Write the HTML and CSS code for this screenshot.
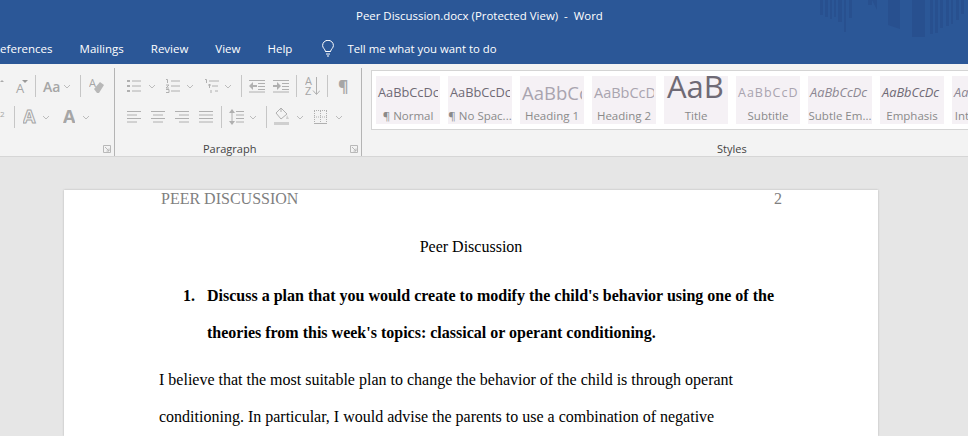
FILE: index.html
```html
<!DOCTYPE html>
<html lang="en">
<head>
    <meta charset="UTF-8">
    <meta name="viewport" content="width=device-width, initial-scale=1.0">
    <title>Peer Discussion.docx (Protected View) - Word</title>
    <link rel="stylesheet" href="styles.css">
</head>
<body>
    <header class="titlebar">
        <div class="doc-title">Peer Discussion.docx (Protected View)&nbsp; -&nbsp; Word</div>
        <svg class="title-art" width="148" height="37" viewBox="0 0 148 37">
            <path fill="#28508f" d="M0 0h3v15H0zM5 0h3v17H5zM10 0h2v19h-2zM14 0h2v17h-2zM18 0h4v22h-4zM24 0h2v32h-2zM29 0h3v18h-3zM48 0h4v5h-4zM52 0l5 10V0zM68 0h12v29l-12-4zM92 0h13v37H92zM110 0h3v34h-3zM115 0h3v33h-3zM120 0h3v28h-3zM126 0h3v26h-3zM131 0h2v24h-2zM136 0h3v20h-3zM141 0h3v14h-3z"/>
        </svg>
        <nav class="tabs">
            <span class="tab">References</span>
            <span class="tab">Mailings</span>
            <span class="tab">Review</span>
            <span class="tab">View</span>
            <span class="tab">Help</span>
            <svg class="bulb" width="12" height="17" viewBox="0 0 12 17">
                <path d="M3.5 11.5C3 9 .6 8 .6 5.5a5.4 5.2 0 0 1 10.8 0c0 2.5-2.4 3.500-2.900 6z M3.500 11.500h5M4 14h4M5 16h2" fill="none" stroke="#fff"/>
            </svg>
            <span class="tell">Tell me what you want to do</span>
        </nav>
    </header>

    <section class="ribbon">
        <div class="group group-font">
            <div class="tools font-top">
                <svg width="4" height="22" viewBox="0 0 4 22"><path d="M0 7l2-2 2 2z" fill="#aaa"/></svg>
                <svg width="14" height="22" viewBox="0 0 14 22"><text x="2" y="18" class="glyph glyph-sm">A</text><path d="M8 5h6l-3 3z" fill="#999"/></svg>
                <i class="divider"></i>
                <span class="case-btn">Aa</span>
                <svg class="chev" viewBox="0 0 8 5"><path d="M1 1l3 3 3-3"/></svg>
                <i class="divider"></i>
                <svg width="16" height="22" viewBox="0 0 16 22">
                    <text x="0" y="12" class="glyph glyph-xs">A</text>
                    <path d="M5 14l6-7 4 3-5 8H8z" fill="#b8b8b8"/>
                </svg>
            </div>
            <div class="tools font-bottom">
                <span class="sup">2</span>
                <i class="divider"></i>
                <svg width="14" height="22" viewBox="0 0 14 22"><text x="0" y="17" class="glyph glyph-outline">A</text></svg>
                <svg class="chev" viewBox="0 0 8 5"><path d="M1 1l3 3 3-3"/></svg>
                <svg width="12" height="22" viewBox="0 0 12 22"><text x="0" y="17" class="glyph glyph-bold">A</text></svg>
                <svg class="chev" viewBox="0 0 8 5"><path d="M1 1l3 3 3-3"/></svg>
            </div>
            <div class="group-foot">
                <svg class="launcher" viewBox="0 0 8 8"><path d="M.5 7.500V.5h7v7zM2 2l4 4M6 3.500V6H3.500"/></svg>
            </div>
        </div>

        <div class="group group-para">
            <div class="tools para-top">
                <svg width="14" height="14" viewBox="0 0 14 14"><path class="dots" d="M0 1h3v2H0zM0 6h3v2H0zM0 11h3v2H0z"/><path class="ln" d="M5 2h9M5 7h9M5 12h9"/></svg>
                <svg class="chev" viewBox="0 0 8 5"><path d="M1 1l3 3 3-3"/></svg>
                <svg width="15" height="14" viewBox="0 0 15 14"><path class="ln" d="M6 2h9M6 7h9M6 12h9M1 .5h1.500V4M1 6h3L1 9h3M1 10.500h3v3H1"/></svg>
                <svg class="chev" viewBox="0 0 8 5"><path d="M1 1l3 3 3-3"/></svg>
                <svg width="16" height="14" viewBox="0 0 16 14"><path class="ln" d="M5 2h10M8 7h6M11 12h3M1 .5h1.500V4M4 6h3M5.500 5v4M7 11v3"/></svg>
                <svg class="chev" viewBox="0 0 8 5"><path d="M1 1l3 3 3-3"/></svg>
                <i class="divider"></i>
                <svg width="16" height="14" viewBox="0 0 16 14"><path class="ln" d="M0 1.500h16M9 4.500h7M9 7.500h7M9 10.500h7M0 13h16"/><path class="dots" d="M0 7l4-4v3h4v2H4v3z"/></svg>
                <svg width="16" height="14" viewBox="0 0 16 14"><path class="ln" d="M0 1.500h16M9 4.500h7M9 7.500h7M9 10.500h7M0 13h16"/><path class="dots" d="M8 7L4 3v3H0v2h4v3z"/></svg>
                <i class="divider"></i>
                <svg width="15" height="20" viewBox="0 0 15 20">
                    <text x="0" y="9" class="glyph glyph-xs">A</text>
                    <text x="0" y="19" class="glyph glyph-xs">Z</text>
                    <path class="ln" d="M11.500 1v17M8 14.500l3.500 4 3.500-4"/>
                </svg>
                <i class="divider"></i>
                <span class="pilcrow">¶</span>
            </div>
            <div class="tools para-bottom">
                <svg width="14" height="14" viewBox="0 0 14 14"><path class="ln" d="M0 1.500h14M0 5h10M0 8.500h14M0 12h10"/></svg>
                <svg width="14" height="14" viewBox="0 0 14 14"><path class="ln" d="M0 1.500h14M2 5h10M0 8.500h14M2 12h10"/></svg>
                <svg width="14" height="14" viewBox="0 0 14 14"><path class="ln" d="M0 1.500h14M4 5h10M0 8.500h14M4 12h10"/></svg>
                <svg width="14" height="14" viewBox="0 0 14 14"><path class="ln" d="M0 1.500h14M0 5h14M0 8.500h14M0 12h14"/></svg>
                <i class="divider"></i>
                <svg width="15" height="16" viewBox="0 0 15 16"><path class="ln" d="M7 2.500h8M7 6h8M7 9.500h8M7 13h8M3 1v14"/><path class="dots" d="M0 4l3-4 3 4zM0 12l3 4 3-4z"/></svg>
                <svg class="chev" viewBox="0 0 8 5"><path d="M1 1l3 3 3-3"/></svg>
                <i class="divider"></i>
                <svg width="16" height="20" viewBox="0 0 16 20"><path class="ln" d="M7 1L2 6l5 6 6-5zM7 1v4"/><path class="dots" d="M13 8l2 4h-3zM0 15h15v3H0z" opacity=".55"/></svg>
                <svg class="chev" viewBox="0 0 8 5"><path d="M1 1l3 3 3-3"/></svg>
                <svg width="13" height="14" viewBox="0 0 13 14"><path class="ln dash" d="M.5 1v12M12.500 1v12M0 .5h13M6.500 1v12M0 7h13"/><path class="ln" d="M0 13.500h13"/></svg>
                <svg class="chev" viewBox="0 0 8 5"><path d="M1 1l3 3 3-3"/></svg>
            </div>
            <div class="group-foot">
                <span class="group-label">Paragraph</span>
                <svg class="launcher" viewBox="0 0 8 8"><path d="M.5 7.500V.5h7v7zM2 2l4 4M6 3.500V6H3.500"/></svg>
            </div>
        </div>

        <div class="group-styles">
            <div class="gallery">
                <div class="style"><div class="sample s-normal">AaBbCcDc</div><div class="style-name">¶ Normal</div></div>
                <div class="style"><div class="sample s-normal">AaBbCcDc</div><div class="style-name">¶ No Spac...</div></div>
                <div class="style"><div class="sample s-h1">AaBbCc</div><div class="style-name">Heading 1</div></div>
                <div class="style"><div class="sample s-h2">AaBbCcD</div><div class="style-name">Heading 2</div></div>
                <div class="style"><div class="sample s-title">AaB</div><div class="style-name">Title</div></div>
                <div class="style"><div class="sample s-subtitle">AaBbCcD</div><div class="style-name">Subtitle</div></div>
                <div class="style"><div class="sample s-subtle">AaBbCcDc</div><div class="style-name">Subtle Em...</div></div>
                <div class="style"><div class="sample s-emph">AaBbCcDc</div><div class="style-name">Emphasis</div></div>
                <div class="style"><div class="sample s-subtle">AaBbCcDc</div><div class="style-name">Intense E...</div></div>
            </div>
            <div class="styles-label">Styles</div>
        </div>
    </section>

    <main class="workspace">
        <article class="page">
            <div class="page-header">
                <span>PEER DISCUSSION</span>
                <span>2</span>
            </div>
            <h1 class="doc-heading">Peer Discussion</h1>
            <ol class="questions">
                <li>Discuss a plan that you would create to modify the child's behavior using one of the theories from this week's topics: classical or operant conditioning.</li>
            </ol>
            <p class="answer">I believe that the most suitable plan to change the behavior of the child is through operant<br>conditioning. In particular, I would advise the parents to use a combination of negative</p>
        </article>
    </main>
</body>
</html>
```

FILE: styles.css
```css
* {
    box-sizing: border-box;
}
body {
    margin: 0;
    height: 100vh;
    overflow: hidden;
    display: flex;
    flex-direction: column;
    background-color: #e6e6e6;
    font-family: "Open Sans", "Noto Sans", sans-serif;
}

/* title bar and tabs */
.titlebar {
    position: relative;
    flex: none;
    height: 64px;
    padding-top: 8px;
    background-color: #2b5797;
    color: #fff;
}
.doc-title {
    height: 16px;
    line-height: 16px;
    padding-left: 356px;
    font-size: 11.45px;
    white-space: nowrap;
}
.title-art {
    position: absolute;
    top: 0;
    right: 0;
}
.tabs {
    display: flex;
    align-items: center;
    height: 24px;
    margin-top: 12px;
    margin-left: -7px;
    font-size: 11.5px;
    white-space: nowrap;
}
.tab {
    margin-right: 27px;
}
.bulb {
    margin-left: 3px;
}
.tell {
    margin-left: 13px;
    font-size: 11.35px;
}

/* ribbon */
.ribbon {
    flex: none;
    display: flex;
    height: 93px;
    background-color: #f3f3f3;
    border-bottom: 1px solid #d6d6d6;
    overflow: hidden;
}
.group {
    display: flex;
    flex-direction: column;
    height: 89px;
    margin-top: 4px;
    padding-top: 7px;
    border-right: 1px solid #b4b4b4;
}
.group-font {
    width: 115px;
}
.group-para {
    width: 247px;
    padding-left: 12px;
}
.tools {
    display: grid;
    align-items: center;
    justify-items: start;
    height: 22px;
}
.tools + .tools {
    margin-top: 9px;
}
.font-top {
    grid-template-columns: 14px 21px 8px 20px 17px 9px 16px;
}
.font-bottom {
    grid-template-columns: 14px 9px 19px 21px 19px 8px;
}
.para-top {
    grid-template-columns: 21px 17px 21px 18px 20px 17px 8px 24px 23px 9px 22px 11px 10px;
}
.para-bottom {
    grid-template-columns: 24px 24px 24px 22px 8px 20px 17px 8px 22px 18px 21px 8px;
}
.divider {
    display: block;
    width: 1px;
    height: 22px;
    background-color: #c6c6c6;
}
.chev {
    width: 8px;
    height: 5px;
    fill: none;
    stroke: #bcbcbc;
}
.ln {
    fill: none;
    stroke: #b0b0b0;
}
.dash {
    stroke-dasharray: 1 1;
}
.dots {
    fill: #b0b0b0;
}
.glyph {
    font-family: "Open Sans", sans-serif;
    fill: #a6a6a6;
}
.glyph-xs {
    font-size: 11px;
}
.glyph-sm {
    font-size: 13px;
}
.glyph-outline {
    font-size: 18px;
    font-weight: 700;
    fill: #f3f3f3;
    stroke: #a6a6a6;
}
.glyph-bold {
    font-size: 18px;
    font-weight: 700;
}
.case-btn {
    color: #a6a6a6;
    font-size: 14px;
    font-weight: 600;
}
.sup {
    color: #a6a6a6;
    font-size: 8px;
    padding-bottom: 8px;
}
.pilcrow {
    color: #a6a6a6;
    font-size: 16px;
    font-weight: 700;
    line-height: 22px;
}
.group-foot {
    display: flex;
    align-items: center;
    height: 16px;
    margin-top: 13px;
    padding-right: 3px;
}
.group-label, .styles-label {
    color: #444;
    font-size: 11px;
    line-height: 16px;
}
.group-label {
    margin-left: 76px;
}
.launcher {
    margin-left: auto;
    width: 8px;
    height: 8px;
    fill: none;
    stroke: #b8b8b8;
}

/* style gallery */
.group-styles {
    flex: none;
    width: 606px;
    padding: 6px 0 0 9px;
}
.gallery {
    display: flex;
    gap: 8px;
    width: 700px;
    height: 60px;
    padding: 5px 4px;
    background-color: #fff;
    border: 1px solid #d4d4d4;
    border-right: 0;
}
.style {
    flex: none;
    width: 64px;
    height: 48px;
    overflow: hidden;
    background-color: #f5f1f5;
    text-align: center;
    white-space: nowrap;
}
.sample {
    width: 62px;
    height: 30px;
    overflow: hidden;
    padding-left: 2px;
    text-align: left;
    color: #6f6a75;
    font-size: 12.8px;
    line-height: 33px;
}
.s-h1 {
    color: #a9a4af;
    font-size: 18.5px;
}
.s-h2 {
    color: #a9a4af;
    font-size: 14.5px;
}
.s-title {
    padding-left: 3px;
    font-size: 31px;
    line-height: 20px;
}
.s-subtitle {
    color: #a9a4af;
    font-size: 12.5px;
    letter-spacing: 1px;
}
.s-subtle {
    color: #8c8792;
    font-style: italic;
}
.s-emph {
    font-style: italic;
}
.style-name {
    color: #8a8a8a;
    font-size: 11.5px;
    line-height: 19px;
}
.styles-label {
    width: 606px;
    margin-top: 11px;
    padding-left: 346px;
}

/* document */
.workspace {
    flex: 1;
    min-height: 0;
    display: flex;
    padding: 33px 0 0 64px;
}
.page {
    width: 814px;
    background-color: #fff;
    box-shadow: 0 0 2px #b4b4b4;
    font-family: "Liberation Serif", serif;
    font-size: 16px;
    color: #000;
}
.page-header {
    display: flex;
    justify-content: space-between;
    height: 18px;
    padding: 0 96px 0 97px;
    color: #7f7f7f;
    line-height: 18px;
}
.doc-heading {
    margin: 30px 0 0;
    font-size: 16px;
    font-weight: 400;
    line-height: 18px;
    text-align: center;
}
.questions {
    margin: 21px 0 0;
    padding: 0 96px 0 119px;
    list-style: none;
    font-weight: 700;
    line-height: 37px;
}
.questions li {
    display: flex;
}
.questions li::before {
    content: "1.";
    flex: 0 0 24px;
}
.answer {
    margin: 10px 0 0;
    padding-left: 95px;
    white-space: nowrap;
    line-height: 37px;
}
```
